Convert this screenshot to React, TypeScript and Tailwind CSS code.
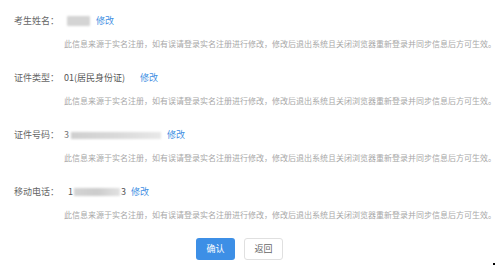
import React from "react";

const NOTE =
  "此信息来源于实名注册，如有误请登录实名注册进行修改，修改后退出系统且关闭浏览器重新登录并同步信息后方可生效。";

function Row({ label, children }: { label: string; children: React.ReactNode }) {
  return (
    <div className="flex flex-col">
      <div className="flex items-center h-[16px]">
        <div className="w-[50px] shrink-0 text-[9px] leading-[16px] text-[#666]">{label}</div>
        <div className="flex items-center text-[9px] leading-[16px] text-[#555]">{children}</div>
      </div>
      <div className="mt-[9px] pl-[50px] text-[8px] leading-[12px] text-[#a8a8a8] whitespace-nowrap">
        {NOTE}
      </div>
    </div>
  );
}

function Link({ className = "" }: { className?: string }) {
  return <span className={"text-[9px] text-[#3f8fe3] " + className}>修改</span>;
}

export default function App() {
  return (
    <div
      className="relative w-[499px] h-[271px] bg-white overflow-hidden"
      style={{ fontFamily: '"Noto Sans CJK SC", "Noto Sans", sans-serif' }}
    >
      <div className="flex flex-col gap-[20px] pl-[14px] pt-[13px]">
        <Row label="考生姓名：">
          <span className="ml-[3px] w-[23px] h-[10px] bg-[#d4d4d4] blur-[1px] rounded-[1px]" />
          <Link className="ml-[6px]" />
        </Row>
        <Row label="证件类型：">
          <span>01(居民身份证)</span>
          <Link className="ml-[15px]" />
        </Row>
        <Row label="证件号码：">
          <span className="text-[#777]">3</span>
          <span className="ml-[2px] w-[90px] h-[7px] bg-gradient-to-r from-[#cfcfcf] via-[#d9d9d9] to-[#e8e8e8] blur-[1px]" />
          <Link className="ml-[6px]" />
        </Row>
        <Row label="移动电话：">
          <span className="ml-[4px]">1</span>
          <span className="ml-[1px] w-[46px] h-[8px] bg-gradient-to-r from-[#d4d4d4] via-[#cccccc] to-[#e2e2e2] blur-[1px]" />
          <span className="ml-[1px]">3</span>
          <Link className="ml-[5px]" />
        </Row>
      </div>
      <div className="flex gap-[9px] pl-[196px] mt-[17px]">
        <button className="w-[39px] h-[22px] rounded-[3px] bg-[#3d8fe6] text-white text-[9px] leading-[22px]">
          确认
        </button>
        <button className="w-[39px] h-[22px] rounded-[3px] bg-white border border-[#e0e0e0] text-[#666] text-[9px] leading-[20px]">
          返回
        </button>
      </div>
      <div className="absolute left-[493px] top-[263px] w-[2px] h-[2px] bg-black" />
    </div>
  );
}
